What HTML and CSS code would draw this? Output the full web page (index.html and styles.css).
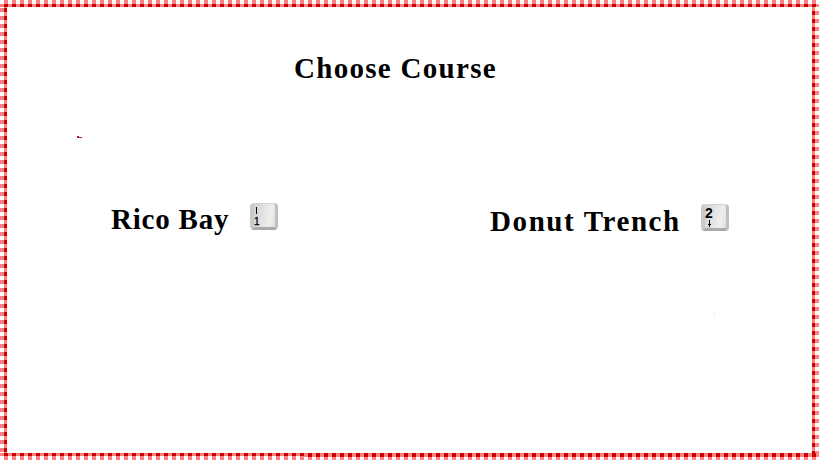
FILE: index.html
```html
<!DOCTYPE html>
<html lang="en">
<head>
<meta charset="utf-8">
<title>Choose Course</title>
<link rel="stylesheet" href="styles.css">
</head>
<body>
<div class="frame">
  <div class="edge top"></div>
  <div class="edge left"></div>
  <main class="screen">
    <h1 class="title">Choose Course</h1>
    <div class="courses">
      <div class="course rico">
        <span class="name">Rico Bay</span>
        <kbd class="key"><svg class="mark" width="2" height="7" viewBox="0 0 2 7"><path d="M0 0h1v7h-1z" fill="#000"/></svg><span class="digit">1</span></kbd>
      </div>
      <div class="course donut">
        <span class="name">Donut Trench</span>
        <kbd class="key"><span class="number">2</span><svg class="arrow" width="5" height="7" viewBox="0 0 5 7"><path d="M2 0h1v7h-1zM1 4h3v1h-3z" fill="#000"/></svg></kbd>
      </div>
    </div>
    <svg class="speck" width="5" height="2" viewBox="0 0 5 2"><path d="M0 0h2v1h3v1h-5z" fill="#a51c24"/></svg>
    <i class="dot"></i>
  </main>
  <div class="edge right"></div>
  <div class="bottom"><div class="edge thin"></div><div class="edge thick"></div></div>
</div>
</body>
</html>
```
FILE: styles.css
```css
html, body { margin: 0; height: 100%; background: #fff; }
body { overflow: hidden; color: #000; font-family: "Liberation Serif", serif; }

.frame {
  display: grid;
  width: 820px;
  height: 461px;
  grid-template-columns: 7px 805px 8px;
  grid-template-rows: 7px 446px 8px;
}
.edge { --pink: #ff8080; --red: #c80000; }
.top {
  grid-column: 1 / -1;
  margin-right: 1px;
  background:
    repeating-linear-gradient(90deg, transparent 0 4px, var(--red) 4px 8px) 0 4px / 100% 3px no-repeat,
    linear-gradient(var(--pink), var(--pink)) 0 4px / 100% 3px no-repeat,
    repeating-linear-gradient(90deg, #fff 0 4px, var(--pink) 4px 8px);
}
.left {
  background:
    repeating-linear-gradient(180deg, transparent 0 1px, var(--red) 1px 5px, transparent 5px 8px) 4px 0 / 3px 100% no-repeat,
    linear-gradient(var(--pink), var(--pink)) 4px 0 / 3px 100% no-repeat,
    repeating-linear-gradient(180deg, #fff 0 1px, var(--pink) 1px 5px, #fff 5px 8px);
}
.right {
  margin-right: 1px;
  background:
    repeating-linear-gradient(180deg, transparent 0 4px, var(--red) 4px 8px) 0 0 / 3px 100% no-repeat,
    linear-gradient(var(--pink), var(--pink)) 0 0 / 3px 100% no-repeat,
    repeating-linear-gradient(180deg, #fff 0 4px, var(--pink) 4px 8px);
}
.bottom {
  grid-column: 1 / -1;
  display: grid;
  grid-template-columns: 304px 515px;
  height: 7px;
}
.thin, .thick {
  background:
    repeating-linear-gradient(90deg, transparent 0 4px, var(--red) 4px 8px) 0 0 / 100% var(--band) no-repeat,
    linear-gradient(var(--pink), var(--pink)) 0 0 / 100% var(--band) no-repeat,
    repeating-linear-gradient(90deg, #fff 0 4px, var(--pink) 4px 8px);
}
.thin { --band: 3px; }
.thick { --band: 4px; }

.screen { position: relative; }
.title {
  margin: 44px 0 0 287px;
  font-size: 29px;
  line-height: 34px;
  font-weight: 700;
  letter-spacing: 1.3px;
}
.courses { display: flex; margin-top: 118px; }
.course { display: flex; align-items: flex-start; }
.rico { margin-left: 104px; width: 379px; }
.donut { margin-top: 1px; }
.name {
  font-size: 29px;
  font-weight: 700;
  line-height: 34px;
  margin-top: -1px;
  white-space: nowrap;
}
.rico .name { width: 139px; letter-spacing: .8px; }
.donut .name { width: 211px; margin-top: 0; letter-spacing: 1.6px; }
.key {
  box-sizing: border-box;
  display: flex;
  flex-direction: column;
  width: 28px;
  height: 27px;
  border: solid;
  border-width: 1px 3px 3px 4px;
  border-color: #d2d2d2 #c0c0c0 #aaa #cacaca;
  border-radius: 4px;
  background: linear-gradient(100deg, #d2d2d2, #efefef 75%, #dedede);
  font-family: "Liberation Sans", sans-serif;
  color: #000;
}
.mark { margin: 3px 0 2px 2px; }
.digit { font-size: 10px; line-height: 11px; font-weight: 400; -webkit-text-stroke: .3px #000; }
.number { font-size: 14px; line-height: 12px; font-weight: 700; margin: 2px 0 0; }
.arrow { margin: 1px 0 0 2px; }
.speck { position: absolute; left: 70px; top: 129px; }
.dot { position: absolute; left: 707px; top: 306px; width: 1px; height: 3px; background: #e8e8e8; }
```
